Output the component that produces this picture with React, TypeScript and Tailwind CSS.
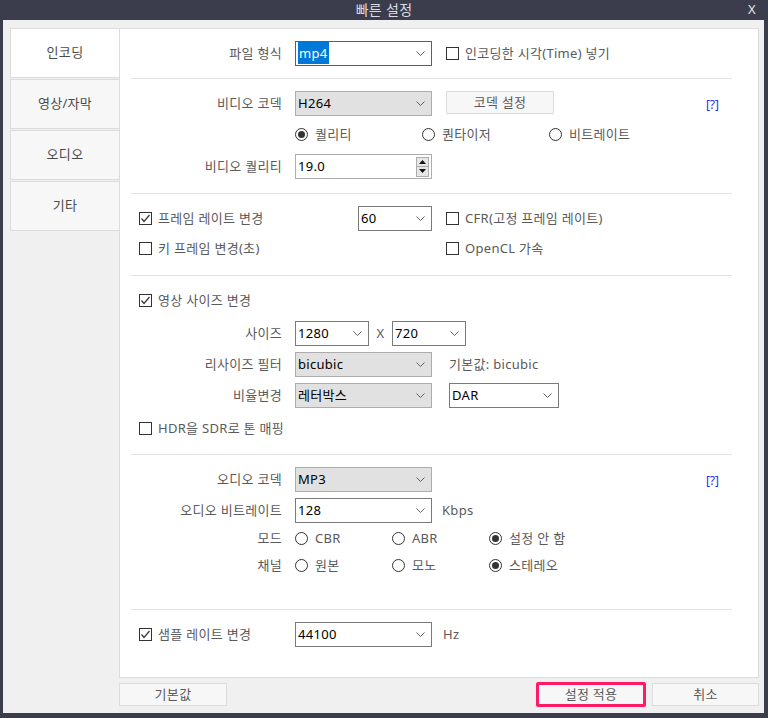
import React from "react";

const F = "font-['Noto_Sans','Noto_Sans_CJK_KR',sans-serif] tracking-[0.3px]";
const T = "text-[13px] leading-none text-[#5a5a5a]";

function Chevron() {
  return (
    <svg width="9" height="5" viewBox="0 0 9 5" className="shrink-0">
      <polyline points="0.5,0.5 4.5,4.5 8.5,0.5" fill="none" stroke="#606060" strokeWidth="1" />
    </svg>
  );
}

function Select({
  w,
  value,
  gray,
  focus,
}: {
  w: string;
  value: React.ReactNode;
  gray?: boolean;
  focus?: boolean;
}) {
  const border = focus ? "border-[#0078d7]" : gray ? "border-[#adadad]" : "border-[#7a7a7a]";
  const bg = gray ? "bg-[#e1e1e1]" : "bg-white";
  return (
    <div className={`${w} h-[25px] border ${border} ${bg} flex items-center justify-between pl-[2px] pr-[6px] text-[13px] leading-none text-black shrink-0`}>
      <span>{value}</span>
      <Chevron />
    </div>
  );
}

function Checkbox({ checked }: { checked?: boolean }) {
  return (
    <div className="w-[13px] h-[13px] border border-[#333333] bg-white flex items-center justify-center shrink-0">
      {checked && (
        <svg width="11" height="11" viewBox="0 0 11 11">
          <polyline points="1.5,5.5 4,8.5 9.5,2" fill="none" stroke="#333333" strokeWidth="1.2" />
        </svg>
      )}
    </div>
  );
}

function Radio({ checked }: { checked?: boolean }) {
  return (
    <div className="w-[13px] h-[13px] rounded-full border border-[#333333] bg-white flex items-center justify-center shrink-0">
      {checked && <div className="w-[7px] h-[7px] rounded-full bg-[#333333]" />}
    </div>
  );
}

function Label({ children }: { children: React.ReactNode }) {
  return <div className={`w-[163px] text-right ${T} shrink-0 pr-[1px]`}>{children}</div>;
}

function Sep({ mt }: { mt: string }) {
  return <div className={`${mt} h-px bg-[#e3e3e3] ml-[11px] mr-[26px]`} />;
}

function Help() {
  return <div className="ml-auto mr-[39px] text-[12px] leading-none text-[#2a2aff] mt-[2px] tracking-normal">[?]</div>;
}

function RadioItem({ w, checked, label }: { w: string; checked?: boolean; label: string }) {
  return (
    <div className={`${w} flex items-center gap-[7px] shrink-0`}>
      <Radio checked={checked} />
      <span className={T}>{label}</span>
    </div>
  );
}

function Tab({ label, active }: { label: string; active?: boolean }) {
  return (
    <div
      className={`h-[50px] border-l border-t border-b border-[#dcdcdc] flex items-center justify-center text-[13px] text-[#4a4a4a] ${
        active ? "bg-white" : "bg-[#f7f7f7]"
      }`}
    >
      {label}
    </div>
  );
}

function Button({ w, label }: { w: string; label: string }) {
  return (
    <div className={`${w} h-[23px] border border-[#dcdcdc] bg-[#f7f7f7] flex items-center justify-center ${T} shrink-0`}>
      {label}
    </div>
  );
}

export default function App() {
  return (
    <div className={`w-[768px] h-[718px] bg-[#3b3d4c] flex flex-col ${F}`}>
      {/* title bar */}
      <div className="h-[20px] flex items-center relative shrink-0">
        <div className="flex-1 text-center text-[14px] leading-none text-[#dcdce4]">빠른 설정</div>
        <div className="absolute right-[12px] top-[3px] text-[13px] leading-none text-[#e8e8ee]">X</div>
      </div>
      {/* body */}
      <div className="flex-1 ml-[3px] mr-[4px] mb-[5px] bg-[#f0f0f0] pl-[7px] pt-[8px] pr-[5px] flex flex-col">
        <div className="flex">
          {/* tabs */}
          <div className="w-[109px] flex flex-col gap-[1px] shrink-0">
            <Tab label="인코딩" active />
            <Tab label="영상/자막" />
            <Tab label="오디오" />
            <Tab label="기타" />
          </div>
          {/* panel */}
          <div className="w-[640px] h-[650px] border border-[#dcdcdc] bg-white flex flex-col">
            {/* section 1 */}
            <div className="mt-[12px] h-[25px] flex items-center">
              <Label>파일 형식</Label>
              <div className="ml-[12px]">
                <Select
                  w="w-[137px]"
                  focus
                  value={<span className="bg-[#0078d7] text-white px-[1px] py-[2px]">mp4</span>}
                />
              </div>
              <div className="ml-[14px]">
                <Checkbox />
              </div>
              <span className={`ml-[6px] ${T}`}>인코딩한 시각(Time) 넣기</span>
            </div>
            <Sep mt="mt-[12px]" />
            {/* section 2 */}
            <div className="mt-[12px] h-[25px] flex items-center">
              <Label>비디오 코덱</Label>
              <div className="ml-[12px]">
                <Select w="w-[137px]" gray value="H264" />
              </div>
              <div className="ml-[14px] self-start">
                <Button w="w-[108px]" label="코덱 설정" />
              </div>
              <Help />
            </div>
            <div className="mt-[8px] h-[20px] flex items-center pl-[175px]">
              <RadioItem w="w-[127px]" checked label="퀄리티" />
              <RadioItem w="w-[127px]" label="퀀타이저" />
              <RadioItem w="w-[127px]" label="비트레이트" />
            </div>
            <div className="mt-[10px] h-[25px] flex items-center">
              <Label>비디오 퀄리티</Label>
              <div className="ml-[12px] w-[137px] h-[25px] border border-[#adadad] bg-white flex items-center justify-between pl-[2px] pr-[2px]">
                <span className="text-[13px] leading-none text-black">19.0</span>
                <div className="w-[13px] h-[20px] flex flex-col">
                  <div className="h-[10px] border border-[#acacac] bg-[#e6e6e6] flex items-center justify-center">
                    <svg width="7" height="4" viewBox="0 0 7 4">
                      <polygon points="0,4 3.5,0 7,4" fill="#111111" />
                    </svg>
                  </div>
                  <div className="h-[10px] border border-t-0 border-[#acacac] bg-[#e6e6e6] flex items-center justify-center">
                    <svg width="7" height="4" viewBox="0 0 7 4">
                      <polygon points="0,0 3.5,4 7,0" fill="#111111" />
                    </svg>
                  </div>
                </div>
              </div>
            </div>
            <Sep mt="mt-[14px]" />
            {/* section 3 */}
            <div className="mt-[12px] h-[25px] flex items-center pl-[19px]">
              <div className="w-[219px] flex items-center gap-[6px] shrink-0">
                <Checkbox checked />
                <span className={T}>프레임 레이트 변경</span>
              </div>
              <Select w="w-[74px]" value="60" />
              <div className="ml-[14px]">
                <Checkbox />
              </div>
              <span className={`ml-[6px] ${T}`}>CFR(고정 프레임 레이트)</span>
            </div>
            <div className="mt-[7px] h-[20px] flex items-center pl-[19px]">
              <div className="w-[307px] flex items-center gap-[6px] shrink-0">
                <Checkbox />
                <span className={T}>키 프레임 변경(초)</span>
              </div>
              <Checkbox />
              <span className={`ml-[6px] ${T}`}>OpenCL 가속</span>
            </div>
            <Sep mt="mt-[17px]" />
            {/* section 4 */}
            <div className="mt-[14px] h-[20px] flex items-center pl-[19px] gap-[6px]">
              <Checkbox checked />
              <span className={T}>영상 사이즈 변경</span>
            </div>
            <div className="mt-[11px] h-[25px] flex items-center">
              <Label>사이즈</Label>
              <div className="ml-[12px]">
                <Select w="w-[74px]" value="1280" />
              </div>
              <div className={`w-[23px] text-center ${T} shrink-0`}>X</div>
              <Select w="w-[74px]" value="720" />
            </div>
            <div className="mt-[6px] h-[25px] flex items-center">
              <Label>리사이즈 필터</Label>
              <div className="ml-[12px]">
                <Select w="w-[137px]" gray value="bicubic" />
              </div>
              <span className={`ml-[17px] ${T}`}>기본값: bicubic</span>
            </div>
            <div className="mt-[6px] h-[25px] flex items-center">
              <Label>비율변경</Label>
              <div className="ml-[12px]">
                <Select w="w-[137px]" gray value="레터박스" />
              </div>
              <div className="ml-[17px]">
                <Select w="w-[110px]" value="DAR" />
              </div>
            </div>
            <div className="mt-[10px] h-[20px] flex items-center pl-[19px] gap-[6px]">
              <Checkbox />
              <span className={T}>HDR을 SDR로 톤 매핑</span>
            </div>
            <Sep mt="mt-[16px]" />
            {/* section 5 */}
            <div className="mt-[12px] h-[25px] flex items-center">
              <Label>오디오 코덱</Label>
              <div className="ml-[12px]">
                <Select w="w-[137px]" gray value="MP3" />
              </div>
              <Help />
            </div>
            <div className="mt-[6px] h-[25px] flex items-center">
              <Label>오디오 비트레이트</Label>
              <div className="ml-[12px]">
                <Select w="w-[137px]" value="128" />
              </div>
              <span className={`ml-[10px] ${T}`}>Kbps</span>
            </div>
            <div className="mt-[5px] h-[20px] flex items-center">
              <Label>모드</Label>
              <div className="ml-[12px] flex items-center">
                <RadioItem w="w-[97px]" label="CBR" />
                <RadioItem w="w-[97px]" label="ABR" />
                <RadioItem w="w-[120px]" checked label="설정 안 함" />
              </div>
            </div>
            <div className="mt-[7px] h-[20px] flex items-center">
              <Label>채널</Label>
              <div className="ml-[12px] flex items-center">
                <RadioItem w="w-[97px]" label="원본" />
                <RadioItem w="w-[97px]" label="모노" />
                <RadioItem w="w-[120px]" checked label="스테레오" />
              </div>
            </div>
            <Sep mt="mt-[34px]" />
            {/* section 6 */}
            <div className="mt-[12px] h-[25px] flex items-center pl-[19px]">
              <div className="w-[156px] flex items-center gap-[6px] shrink-0">
                <Checkbox checked />
                <span className={T}>샘플 레이트 변경</span>
              </div>
              <Select w="w-[137px]" value="44100" />
              <span className={`ml-[11px] ${T}`}>Hz</span>
            </div>
          </div>
        </div>
        {/* bottom buttons */}
        <div className="mt-[4px] h-[25px] flex items-center pl-[109px]">
          <Button w="w-[108px]" label="기본값" />
          <div className={`ml-auto w-[110px] h-[25px] border-[3px] border-[#ff1a66] rounded-[2px] bg-[#f7f7f7] flex items-center justify-center ${T}`}>
            설정 적용
          </div>
          <div className="ml-[6px]">
            <Button w="w-[107px]" label="취소" />
          </div>
        </div>
      </div>
    </div>
  );
}
